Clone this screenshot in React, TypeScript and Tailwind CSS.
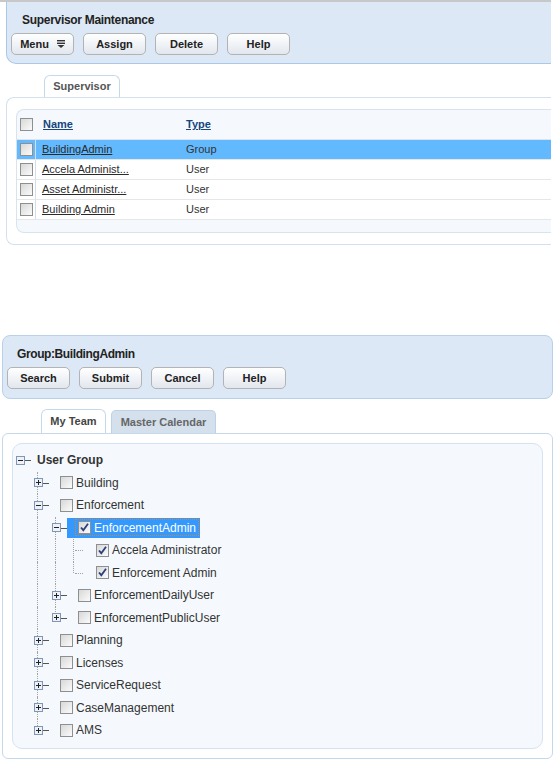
import React from 'react'

const font = "font-['Liberation_Sans',Arial,sans-serif]"

function Btn({ label, menu }: { label: string; menu?: boolean }) {
  return (
    <button className="flex h-[22px] w-[63px] items-center justify-center gap-[8px] rounded-[5px] border border-[#b3b3b3] bg-gradient-to-b from-[#ffffff] to-[#e2e7ee] text-[11px] font-bold text-[#222]">
      <span>{label}</span>
      {menu && (
        <svg width="8" height="8" viewBox="0 0 8 8">
          <rect x="0" y="0" width="8" height="1.4" fill="#333" />
          <rect x="0" y="2.6" width="8" height="1.4" fill="#333" />
          <path d="M0.5 5 L7.5 5 L4 8 Z" fill="#333" />
        </svg>
      )}
    </button>
  )
}

function Check({ checked }: { checked?: boolean }) {
  return (
    <span className="flex h-[13px] w-[13px] shrink-0 items-center justify-center border border-[#8e8f8f] bg-gradient-to-br from-[#d8d8d8] to-[#fbfbfb]">
      {checked && (
        <svg width="11" height="11" viewBox="0 0 11 11">
          <path d="M2 5.5 L4.3 8.2 L9 1.8" stroke="#2b3f7a" strokeWidth="1.8" fill="none" />
        </svg>
      )}
    </span>
  )
}

function Expander({ open }: { open: boolean }) {
  return (
    <svg width="9" height="9" viewBox="0 0 9 9" className="relative z-10 block">
      <rect x="0.5" y="0.5" width="8" height="8" fill="#eef2f7" stroke="#7f97b6" />
      <rect x="2" y="4" width="5" height="1" fill="#222" />
      {!open && <rect x="4" y="2" width="1" height="5" fill="#222" />}
    </svg>
  )
}

type Node = {
  label: string
  level: number
  exp?: 'open' | 'closed'
  checked?: boolean
  selected?: boolean
  guides: boolean[]
  last?: boolean
}

const tree: Node[] = [
  { label: 'User Group', level: 0, exp: 'open', guides: [] },
  { label: 'Building', level: 1, exp: 'closed', guides: [] },
  { label: 'Enforcement', level: 1, exp: 'open', guides: [] },
  { label: 'EnforcementAdmin', level: 2, exp: 'open', checked: true, selected: true, guides: [true] },
  { label: 'Accela Administrator', level: 3, checked: true, guides: [true, true] },
  { label: 'Enforcement Admin', level: 3, checked: true, guides: [true, true], last: true },
  { label: 'EnforcementDailyUser', level: 2, exp: 'closed', guides: [true] },
  { label: 'EnforcementPublicUser', level: 2, exp: 'closed', guides: [true], last: true },
  { label: 'Planning', level: 1, exp: 'closed', guides: [] },
  { label: 'Licenses', level: 1, exp: 'closed', guides: [] },
  { label: 'ServiceRequest', level: 1, exp: 'closed', guides: [] },
  { label: 'CaseManagement', level: 1, exp: 'closed', guides: [] },
  { label: 'AMS', level: 1, exp: 'closed', guides: [], last: true },
]

function TreeRow({ n }: { n: Node }) {
  return (
    <div className="flex h-[22.5px] items-center">
      {n.level > 0 && <div className="w-[18px] shrink-0" />}
      {n.guides.map((g, i) => (
        <div key={i} className="relative h-full w-[18px] shrink-0">
          {g && <div className="absolute left-[8px] top-0 h-full border-l border-dotted border-[#a3a3a3]" />}
        </div>
      ))}
      <div className="relative flex h-full w-[18px] shrink-0 items-center justify-center">
        {n.level > 0 && (
          <div
            className={`absolute left-[8px] top-0 border-l border-dotted border-[#a3a3a3] ${n.last ? 'h-1/2' : 'h-full'}`}
          />
        )}
        {n.exp ? (
          <>
            <Expander open={n.exp === 'open'} />
            <div className="absolute left-[14px] top-[11px] h-px w-[6px] bg-[#555]" />
          </>
        ) : (
          <div className="absolute left-[10px] top-[11px] w-[8px] border-t border-dotted border-[#a3a3a3]" />
        )}
      </div>
      {n.level === 0 ? (
        <span className="ml-[8px] text-[12px] font-bold text-[#333]">{n.label}</span>
      ) : (
        <div
          className={`ml-[2px] flex h-[20px] items-center pl-[8px] pr-[1px] ${n.selected ? 'bg-[#3399ff]' : ''}`}
        >
          <span
            className={`flex h-[17px] items-center gap-[3px] border border-dotted px-[2px] ${
              n.selected ? 'border-[#d9822b] text-white' : 'border-transparent text-[#333]'
            }`}
          >
            <Check checked={n.checked} />
            <span className="text-[12px] leading-none">{n.label}</span>
          </span>
        </div>
      )}
    </div>
  )
}

const rows = [
  { name: 'BuildingAdmin', type: 'Group', selected: true },
  { name: 'Accela Administ...', type: 'User' },
  { name: 'Asset Administr...', type: 'User' },
  { name: 'Building Admin', type: 'User' },
]

export default function App() {
  return (
    <div className={`h-[760px] w-[556px] overflow-hidden bg-white ${font}`}>
      {/* Supervisor Maintenance */}
      <div className="h-[2px] w-[551px] bg-[#c8c8c8]" />
      <div className="ml-[6px] h-[62px] w-[545px] rounded-bl-[10px] border-b border-l border-[#a9c9e8] bg-[#dce8f5]">
        <div className="pl-[15px] pt-[10px] text-[12px] font-bold leading-[16px] tracking-[-0.3px] text-[#222]">
          Supervisor Maintenance
        </div>
        <div className="mt-[5px] flex gap-[9px] pl-[4px]">
          <Btn label="Menu" menu />
          <Btn label="Assign" />
          <Btn label="Delete" />
          <Btn label="Help" />
        </div>
      </div>

      <div className="mt-[11px] flex">
        <div className="ml-[44px] flex h-[22px] w-[76px] items-center justify-center rounded-t-[6px] border border-b-0 border-[#c5d9ed] bg-white text-[11px] font-bold text-[#555]">
          Supervisor
        </div>
      </div>
      <div className="ml-[6px] w-[545px] rounded-l-[8px] border-b border-l border-t border-[#d3e1ee] py-[11px] pl-[9px]">
        <div className="rounded-l-[8px] border-b border-l border-t border-[#d7e4f0] bg-[#f5f9fd] pb-[12px]">
          <div className="flex h-[30px] items-center border-b border-[#dde3ea]">
            <div className="w-[19px] pl-[3px]">
              <Check />
            </div>
            <div className="w-[150px] pl-[7px] text-[11px] font-bold text-[#17457e] underline">Name</div>
            <div className="text-[11px] font-bold text-[#17457e] underline">Type</div>
          </div>
          {rows.map((r) => (
            <div
              key={r.name}
              className={`flex h-[20px] items-center border-b border-[#e6e6e6] ${r.selected ? 'bg-[#62b9fd]' : 'bg-white'}`}
            >
              <div className="flex h-full w-[19px] items-center border-r border-[#d5dfe9] pl-[3px]">
                <Check />
              </div>
              <div className="w-[150px] pl-[6px] text-[11px] text-[#2a2a2a] underline">{r.name}</div>
              <div className="text-[11px] text-[#333]">{r.type}</div>
            </div>
          ))}
        </div>
      </div>

      {/* Group:BuildingAdmin */}
      <div className="ml-[2px] mt-[90px] h-[64px] w-[551px] rounded-[8px] border border-[#b8d0e8] bg-[#dce8f5]">
        <div className="pl-[14px] pt-[10px] text-[12px] font-bold leading-[16px] tracking-[-0.4px] text-[#222]">
          Group:BuildingAdmin
        </div>
        <div className="mt-[5px] flex gap-[9px] pl-[4px]">
          <Btn label="Search" />
          <Btn label="Submit" />
          <Btn label="Cancel" />
          <Btn label="Help" />
        </div>
      </div>

      <div className="mt-[10px] flex items-end">
        <div className="ml-[41px] flex h-[24px] w-[65px] items-center justify-center rounded-t-[6px] border border-b-0 border-[#c5d9ed] bg-white text-[11px] font-bold text-[#444]">
          My Team
        </div>
        <div className="ml-[5px] flex h-[23px] w-[105px] items-center justify-center rounded-t-[5px] border border-b-0 border-[#bfd2e5] bg-[#d4e0ec] text-[11px] font-bold text-[#666]">
          Master Calendar
        </div>
      </div>
      <div className="ml-[2px] h-[326px] w-[551px] rounded-[6px] border border-[#c5d9ed] p-[9px]">
        <div className="h-[306px] rounded-[10px] border border-[#d5e3f1] bg-[#f5f9fd] pt-[5px]">
          <div className="-ml-[2px]">
            {tree.map((n) => (
              <TreeRow key={n.label} n={n} />
            ))}
          </div>
        </div>
      </div>
    </div>
  )
}
